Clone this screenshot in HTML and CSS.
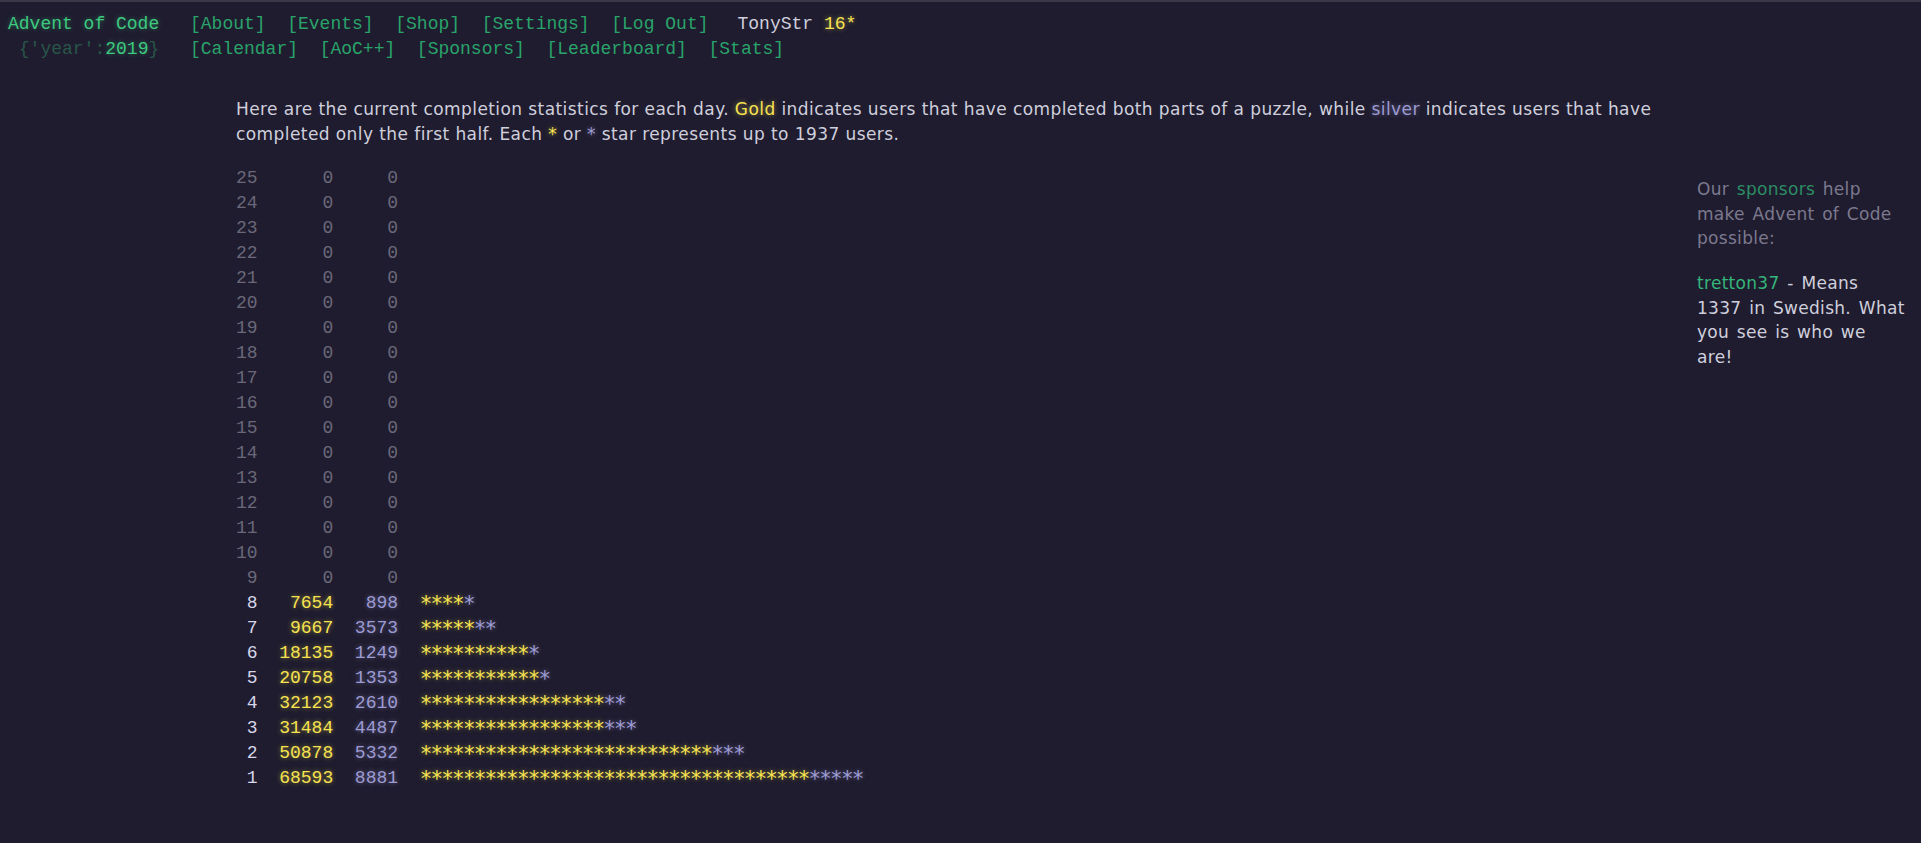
FILE: index.html
```html
<!DOCTYPE html>
<html lang="en">
<head>
<meta charset="utf-8">
<title>Stats - Advent of Code 2019</title>
<link rel="stylesheet" href="styles.css">
</head>
<body class="page">
<header class="header">
  <div class="header-row">
    <h1 class="title title-global"><a class="title-link" href="#">Advent of Code</a></h1>
    <nav class="nav">
      <a class="nav-link" href="#">[About]</a>
      <a class="nav-link" href="#">[Events]</a>
      <a class="nav-link" href="#">[Shop]</a>
      <a class="nav-link" href="#">[Settings]</a>
      <a class="nav-link" href="#">[Log&nbsp;Out]</a>
    </nav>
    <div class="user">TonyStr <span class="star-count">16*</span></div>
  </div>
  <div class="header-row">
    <h1 class="title title-event">&nbsp;<span class="title-wrap">{'year':</span><a class="title-link" href="#">2019</a><span class="title-wrap">}</span></h1>
    <nav class="nav">
      <a class="nav-link" href="#">[Calendar]</a>
      <a class="nav-link" href="#">[AoC++]</a>
      <a class="nav-link" href="#">[Sponsors]</a>
      <a class="nav-link" href="#">[Leaderboard]</a>
      <a class="nav-link" href="#">[Stats]</a>
    </nav>
  </div>
</header>
<div class="layout">
  <main class="main">
    <p class="intro">Here are the current completion statistics for each day. <span class="gold">Gold</span> indicates users that have completed both parts of a puzzle, while <span class="silver">silver</span> indicates users that have completed only the first half. Each <span class="gold">*</span> or <span class="silver">*</span> star represents up to 1937 users.</p>
<pre class="stats"><span class="dim">25      0     0</span>
<span class="dim">24      0     0</span>
<span class="dim">23      0     0</span>
<span class="dim">22      0     0</span>
<span class="dim">21      0     0</span>
<span class="dim">20      0     0</span>
<span class="dim">19      0     0</span>
<span class="dim">18      0     0</span>
<span class="dim">17      0     0</span>
<span class="dim">16      0     0</span>
<span class="dim">15      0     0</span>
<span class="dim">14      0     0</span>
<span class="dim">13      0     0</span>
<span class="dim">12      0     0</span>
<span class="dim">11      0     0</span>
<span class="dim">10      0     0</span>
<span class="dim"> 9      0     0</span>
<a class="day" href="#"> 8   <span class="gold">7654</span>   <span class="silver">898</span>  <span class="gold stars">****</span><span class="silver stars">*</span></a>
<a class="day" href="#"> 7   <span class="gold">9667</span>  <span class="silver">3573</span>  <span class="gold stars">*****</span><span class="silver stars">**</span></a>
<a class="day" href="#"> 6  <span class="gold">18135</span>  <span class="silver">1249</span>  <span class="gold stars">**********</span><span class="silver stars">*</span></a>
<a class="day" href="#"> 5  <span class="gold">20758</span>  <span class="silver">1353</span>  <span class="gold stars">***********</span><span class="silver stars">*</span></a>
<a class="day" href="#"> 4  <span class="gold">32123</span>  <span class="silver">2610</span>  <span class="gold stars">*****************</span><span class="silver stars">**</span></a>
<a class="day" href="#"> 3  <span class="gold">31484</span>  <span class="silver">4487</span>  <span class="gold stars">*****************</span><span class="silver stars">***</span></a>
<a class="day" href="#"> 2  <span class="gold">50878</span>  <span class="silver">5332</span>  <span class="gold stars">***************************</span><span class="silver stars">***</span></a>
<a class="day" href="#"> 1  <span class="gold">68593</span>  <span class="silver">8881</span>  <span class="gold stars">************************************</span><span class="silver stars">*****</span></a></pre>
  </main>
  <aside class="sidebar">
    <p class="sidebar-note">Our <a class="sponsors-link" href="#">sponsors</a> help make Advent of Code possible:</p>
    <p class="sponsor"><a class="sponsor-name" href="#">tretton37</a> - Means 1337 in Swedish. What you see is who we are!</p>
  </aside>
</div>
</body>
</html>
```
FILE: styles.css
```css
html {
  background: #1f1c2f;
}

.page {
  margin: 0;
  border-top: 2px solid #3a3948;
  background: #1f1c2f;
  color: #cfcfdc;
  font-family: "DejaVu Sans", "Liberation Sans", sans-serif;
}

.header {
  padding: 10px 8px 0 8px;
  font-family: "Liberation Mono", "DejaVu Sans Mono", monospace;
  font-size: 18px;
  line-height: 25px;
}

.header-row {
  display: flex;
  align-items: baseline;
  white-space: nowrap;
}

.title {
  margin: 0;
  width: 182px;
  font-size: 18px;
  font-weight: normal;
}

.title-link {
  color: #3dc97f;
  text-decoration: none;
  text-shadow: 0 0 5px rgba(61, 201, 127, 0.45);
}

.title-wrap {
  color: #3dc97f;
  opacity: 0.33;
}

.nav {
  display: flex;
  gap: 21.6px;
}

.nav-link {
  color: #29a36a;
  text-decoration: none;
}

.user {
  margin-left: 29px;
  color: #cfcfdc;
}

.star-count {
  color: #f7e34f;
  text-shadow: 0 0 5px rgba(247, 227, 79, 0.5);
}

.layout {
  display: flex;
  align-items: flex-start;
  padding-top: 35px;
}

.main {
  margin-left: 236px;
  width: 1430px;
}

.intro {
  margin: 0;
  font-size: 17px;
  letter-spacing: 0.42px;
  line-height: 25px;
}

.gold {
  color: #f7e34f;
  text-shadow: 0 0 5px rgba(247, 227, 79, 0.5);
}

.silver {
  color: #9d9bd3;
  text-shadow: 0 0 5px rgba(157, 155, 211, 0.5);
}

.stats {
  margin: 19px 0 0 0;
  font-family: "Liberation Mono", "DejaVu Sans Mono", monospace;
  font-size: 18px;
  line-height: 25px;
  letter-spacing: 0;
  color: #cfcfdc;
}

.stars {
  font-family: "DejaVu Sans Mono", "Liberation Mono", monospace;
  font-size: 21px;
  letter-spacing: -1.842px;
  line-height: 1;
  vertical-align: -3px;
}

.dim {
  color: #6a6878;
}

.day {
  color: #d6d6ea;
  text-decoration: none;
}

.sidebar {
  margin-left: 31px;
  margin-top: 80px;
  width: 210px;
  font-size: 17px;
  letter-spacing: 0.3px;
  word-spacing: 2px;
  line-height: 24.5px;
}

.sidebar-note {
  margin: 0 0 20.5px 0;
  color: #7c798e;
}

.sponsors-link {
  color: #2b8c62;
  text-decoration: none;
}

.sponsor {
  margin: 0;
  color: #cfcfdc;
}

.sponsor-name {
  color: #34b57a;
  text-decoration: none;
}
```
